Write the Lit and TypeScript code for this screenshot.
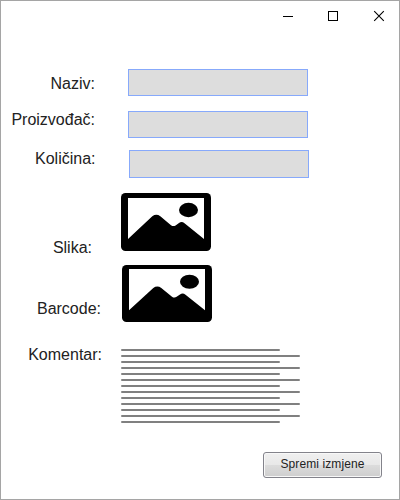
import { LitElement, html, css, svg } from "lit";
import { customElement, property } from "lit/decorators.js";

@customElement("window-bar")
class WindowBar extends LitElement {
  static styles = css`
    :host { display: flex; justify-content: flex-end; height: 30px; }
    svg { display: block; width: 46px; height: 30px; fill: none; stroke: #000; stroke-width: 1; }
    .first { width: 45px; }
    .last { width: 42px; }
  `;
  render() {
    return html`
      <svg class="first" viewBox="0 0 45 30" shape-rendering="crispEdges"><path d="M17 15.5H27" /></svg>
      <svg viewBox="0 0 46 30" shape-rendering="crispEdges"><rect x="17.5" y="10.5" width="9" height="9" /></svg>
      <svg class="last" viewBox="0 0 42 30"><path d="M17.2 10.2L26.8 19.8M26.8 10.2L17.2 19.8" stroke-width="1.1" /></svg>
    `;
  }
}

@customElement("picture-box")
class PictureBox extends LitElement {
  static styles = css`
    :host { display: block; width: 90px; }
    svg { display: block; }
  `;
  @property({ type: Number }) height = 58;
  @property({ type: Number }) inset = 5;
  render() {
    return html`<svg width="90" height=${this.height} viewBox="0 0 90 58" preserveAspectRatio="none">
      ${svg`
        <rect width="90" height="58" rx="4.5" ry="4.5" fill="#000" />
        <path fill="#fff" d=${`M7 ${this.inset}H83V46L63.5 30.2Q60.8 27.9 58 29.9L54.6 32.4Q52.3 33.8 50 32.2L39.3 23.3Q35.3 20.4 31.3 23.3L7 46Z`} />
        <ellipse cx="67.5" cy="17" rx="9.5" ry="7.2" fill="#000" />
      `}
    </svg>`;
  }
}

@customElement("app-root")
class AppRoot extends LitElement {
  static styles = css`
    :host {
      display: flex; flex-direction: column; box-sizing: border-box;
      width: 400px; height: 500px; background: #fff; border: 1px solid #a5a5a5;
      font-family: "Liberation Sans", Arial, sans-serif; color: #222; overflow: hidden;
    }
    .form { display: flex; flex-direction: column; padding-top: 38px; }
    .row { display: flex; align-items: flex-start; }
    .label {
      box-sizing: border-box; flex: none; width: 120px; padding-right: 26px;
      text-align: right; font-size: 16px; line-height: 18px; white-space: nowrap;
    }
    .field {
      box-sizing: border-box; width: 180px; height: 27px; margin: 0 0 0 7px; padding: 0 4px;
      background: #ddd; border: 1px solid #87a9fb; border-radius: 0; outline: none; font: inherit;
    }
    .name, .maker { height: 27px; }
    .name { margin-bottom: 15px; }
    .name .label { padding-top: 6px; }
    .maker { margin-bottom: 12px; }
    .maker .label { padding-right: 26px; }
    .amount { height: 28px; margin-bottom: 15px; }
    .amount .label { padding-right: 25.5px; }
    .amount .field { height: 28px; margin-left: 8px; }
    .photo { height: 72px; }
    .photo .label { padding: 46px 29px 0 0; }
    .barcode { height: 80px; }
    .barcode .label { width: 121px; padding: 35px 21px 0 0; }
    .comment .label { padding: 1px 19px 0 0; }
    .lines { display: flex; flex-direction: column; gap: 4px; padding-top: 4px; }
    .line { width: 179px; height: 2px; background: #808080; border-radius: 1px; }
    .line:nth-child(odd) { width: 159px; }
    .actions { display: flex; justify-content: flex-end; margin-top: auto; padding: 0 17px 21px 0; }
    .save {
      box-sizing: border-box; width: 119px; height: 26px; padding: 0 0 2px; margin: 0;
      border: 1px solid #83838b; border-radius: 3px; box-shadow: inset 0 0 0 1px #f8f8f8;
      background: linear-gradient(#f0f0f0, #e8e8e8 48%, #dcdcdc 50%, #cecece);
      color: #222; font: 12px/20px "Liberation Sans", Arial, sans-serif; letter-spacing: 0.1px; white-space: nowrap;
    }
  `;
  render() {
    return html`
      <window-bar></window-bar>
      <div class="form">
        <div class="row name"><label class="label">Naziv:</label><input class="field" /></div>
        <div class="row maker"><label class="label">Proizvođač:</label><input class="field" /></div>
        <div class="row amount"><label class="label">Količina:</label><input class="field" /></div>
        <div class="row photo"><span class="label">Slika:</span><picture-box .height=${58}></picture-box></div>
        <div class="row barcode"><span class="label">Barcode:</span><picture-box .height=${57} .inset=${4}></picture-box></div>
        <div class="row comment">
          <span class="label">Komentar:</span>
          <div class="lines">${Array.from({ length: 13 }, () => html`<div class="line"></div>`)}</div>
        </div>
      </div>
      <div class="actions"><button class="save">Spremi izmjene</button></div>
    `;
  }
}
